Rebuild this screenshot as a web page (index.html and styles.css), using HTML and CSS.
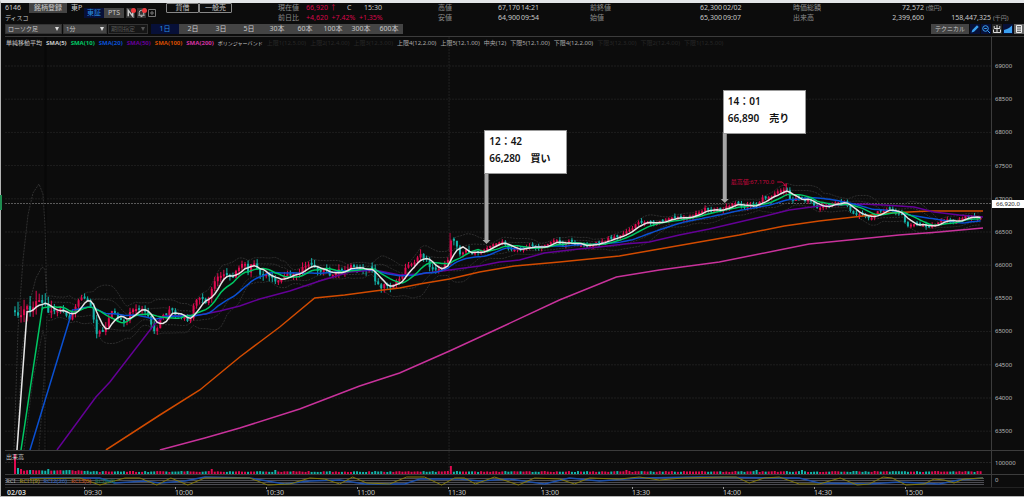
FILE: index.html
```
<!DOCTYPE html>
<html lang="ja">
<head>
  <meta charset="UTF-8" />
  <meta name="viewport" content="width=device-width, initial-scale=1.0"/>
  <title>6146 ディスコ - チャート</title>
  <link rel="stylesheet" href="styles.css">
</head>
<body>
  <div class="app">

    <!-- 銘柄情報 -->
    <header class="quote">
      <div class="symbol">
        <div class="symbol-name">
          <div class="symbol-code"><span>6146</span><button class="btn btn-register">銘柄登録</button></div>
          <h1>ディスコ</h1>
        </div>
        <span class="market">東P</span>
        <div class="market-tabs">
          <button class="btn active">東証</button>
          <button class="btn">PTS</button>
          <button class="icon-btn has-dot" aria-label="ニュース">
            <svg viewBox="0 0 10 10"><path d="M2.5 8.5V2l5 6.5V2" fill="none" stroke="#ccc" stroke-width="1.6"/></svg>
          </button>
          <button class="icon-btn has-dot" aria-label="アラート">
            <svg viewBox="0 0 10 10"><path d="M1.5 7.5h7M2.5 7V4.5a2.5 2.5 0 0 1 5 0V7M4 9h2" fill="none" stroke="#ccc"/></svg>
          </button>
          <button class="icon-btn icon-box" aria-label="設定">
            <svg viewBox="0 0 8 8"><path d="M.5.5h7v7h-7zM3 3h2v2H3z" fill="none" stroke="#777"/></svg>
          </button>
        </div>
        <div class="margin-tags"><button>貸借</button><button>一般売</button></div>
      </div>
      <div class="figures">
        <span class="key">現在値</span><span class="up">66,920 ↑</span><span class="close-mark">C</span><span>15:30</span>
        <span class="key">前日比</span><span class="up change">+4,620&nbsp; +7.42%&nbsp; +1.35%</span>
      </div>
      <div class="prices">
        <span class="key">高値</span><span class="num">67,170</span><span class="time">14:21</span>
        <span class="key">安値</span><span class="num">64,900</span><span class="time">09:54</span>
      </div>
      <div class="prices wide">
        <span class="key">前終値</span><span class="num">62,300</span><span class="time">02/02</span>
        <span class="key">始値</span><span class="num">65,300</span><span class="time">09:07</span>
      </div>
      <div class="totals">
        <span class="key">時価総額</span><span class="num">72,572</span><span class="unit">(億円)</span><span></span>
        <span class="key">出来高</span><span class="num">2,399,600</span><span class="num">158,447,325</span><span class="unit">(千円)</span>
      </div>
    </header>

    <!-- ツールバー -->
    <div class="toolbar">
      <span class="select"><select aria-label="チャート種類"><option>ローソク足</option><option>ライン</option></select></span>
      <span class="select"><select aria-label="足種"><option>1分</option><option>5分</option></select></span>
      <span class="select disabled"><select aria-label="期間" disabled><option>期間指定</option></select></span>
      <div class="periods">
        <button class="active">1日</button><button>2日</button><button>3日</button><button>5日</button><button>30本</button><button>60本</button><button>100本</button><button>300本</button><button>600本</button>
      </div>
      <div class="tools">
        <button class="technical">テクニカル</button>
        <button class="tool blue" aria-label="描画">
          <svg viewBox="0 0 10 10"><path d="M1.500 8.500l.8-2.500L7 1.300 8.700 3 4 7.700z" fill="#3aa0f0"/></svg>
        </button>
        <button class="tool blue" aria-label="拡大">
          <svg viewBox="0 0 10 10"><circle cx="4.500" cy="4.500" r="2.800" fill="none" stroke="#3aa0f0"/><path d="M3.200 4.500h2.600M6.600 6.600L9 9" stroke="#3aa0f0" fill="none"/></svg>
        </button>
        <button class="tool" aria-label="出力">
          <svg viewBox="0 0 10 10"><path d="M5 1v8M2.200 2v2.500h5.600V2M1.500 5.500V8.500h7v-3" fill="none" stroke="#ddd"/></svg>
        </button>
        <button class="tool blue" aria-label="出来高">
          <svg viewBox="0 0 10 10"><path d="M1 9V6l3-1 2-1 3-2.500V9z" fill="#3aa0f0"/></svg>
        </button>
        <button class="tool gray" aria-label="一覧">
          <svg viewBox="0 0 10 10"><path d="M2.500 1.500h5v7h-5zM2.500 4h5M2.500 6.200h5" fill="none" stroke="#eee"/></svg>
        </button>
      </div>
    </div>

    <!-- チャート -->
    <main class="pane price-pane">
      <div class="plot">
        <svg id="price" viewBox="5 37 987 413" preserveAspectRatio="none"></svg>
        <div class="legend">
          <span>単純移動平均</span><b>SMA(5)</b><b class="c-10">SMA(10)</b><b class="c-20">SMA(20)</b><b class="c-50">SMA(50)</b><b class="c-100">SMA(100)</b><b class="c-200">SMA(200)</b>
          <span class="bands-title">ボリンジャーバンド</span>
          <span class="off">上限1(12,5.00)</span><span class="off">上限2(12,4.00)</span><span class="off">上限3(12,3.00)</span>
          <span class="band">上限4(12,2.00)</span><span class="band">上限5(12,1.00)</span><span class="band">中央(12)</span><span class="band">下限5(12,1.00)</span><span class="band">下限4(12,2.00)</span>
          <span class="off">下限3(12,3.00)</span><span class="off">下限2(12,4.00)</span><span class="off">下限1(12,5.00)</span>
        </div>
        <span class="high-mark">最高値:67,170.0</span>
        <div class="note note-buy"><p>12：42</p><p>66,280　買い</p></div>
        <div class="note note-sell"><p>14：01</p><p>66,890　売り</p></div>
      </div>
      <div class="axis">
        <span>69000</span><span>68500</span><span>68000</span><span>67500</span><span>67000</span><span>66500</span><span>66000</span><span>65500</span><span>65000</span><span>64500</span><span>64000</span><span>63500</span>
        <strong class="last-price">66,920.0</strong>
      </div>
    </main>

    <section class="pane volume-pane">
      <div class="plot">
        <svg id="volume" viewBox="5 451 987 23" preserveAspectRatio="none"></svg>
        <span class="pane-title">出来高</span>
      </div>
      <div class="axis"><span>100000</span></div>
    </section>

    <section class="pane rci-pane">
      <div class="plot">
        <svg id="rci" viewBox="5 475 987 12" preserveAspectRatio="none"></svg>
        <div class="rci-legend">
          <span>RCI</span><span class="r1">RCI1(9)</span><span class="r2">RCI2(26)</span><span class="r3">RCI3(0)</span><span class="r4">RCI4(0)</span>
        </div>
      </div>
      <div class="axis"><span>0</span></div>
    </section>

    <footer class="time-axis">
      <b>02/03</b><span>09:30</span><span>10:00</span><span>10:30</span><span>11:00</span><span>11:30</span><span>13:00</span><span>13:30</span><span>14:00</span><span>14:30</span><span>15:00</span>
    </footer>
  </div>

  <script src="chart.js"></script>
</body>
</html>
```

FILE: styles.css
```
/* === BASE === */
* { margin: 0; padding: 0; box-sizing: border-box; }

:root {
  --bg: #0c0c0c;
  --text: #c8c8c8;
  --muted: #8c8c8c;
  --line: #3c3c3c;
  --button: #444;
  --navy: #071038;
  --blue: #2a8fe0;
  --up: #d8064a;
}

body {
  font-family: "Noto Sans", "Noto Sans CJK JP", sans-serif;
  font-size: 7px;
  line-height: 10px;
  color: var(--text);
  background: #e4e6e8;
}

button, select {
  font: inherit;
  color: inherit;
  border: none;
  background: var(--button);
  white-space: nowrap;
}

.app {
  position: relative;
  display: flex;
  flex-direction: column;
  height: 100vh;
  min-height: 300px;
  background: var(--bg);
  border: solid #b4b4b4;
  border-width: 3px 0 1px 1px;
  border-top-color: #e4e6e8;
  padding-left: 4px;
}

/* marker on the left frame */
.app::before {
  content: "";
  position: absolute;
  left: -1px;
  top: 39%;
  width: 2px;
  height: 15px;
  background: #1e8c50;
}

/* === QUOTE === */
.quote {
  display: grid;
  grid-template-columns: 273fr 160fr 152fr 203fr 231fr;
  height: 21px;
  white-space: nowrap;
}

.key { color: var(--muted); }

.symbol { display: flex; }
.symbol-name { width: 66px; }
.symbol-code { display: flex; justify-content: space-between; padding-right: 4px; }
.symbol-code .btn { width: 38px; }
.symbol h1 { font-size: 6px; font-weight: normal; line-height: 10px; }
.symbol .btn { height: 10px; line-height: 10px; }
.market { width: 13px; }
.market-tabs { display: flex; align-items: center; height: 20px; }
.market-tabs .btn { width: 20px; }
.market-tabs .active { background: var(--navy); color: var(--blue); }
.margin-tags { display: flex; margin-left: 10px; }
.margin-tags button {
  width: 33px;
  height: 10px;
  line-height: 8px;
  border: 1px solid #888;
  border-radius: 1px;
  background: none;
}

.icon-btn {
  position: relative;
  width: 9px;
  height: 10px;
  margin-left: 2px;
  background: #333;
}
.icon-btn svg { display: block; width: 100%; height: 100%; }
.icon-box { width: 8px; height: 8px; background: none; }
.has-dot::after {
  content: "";
  position: absolute;
  top: 0;
  right: -1px;
  width: 5px;
  height: 5px;
  border-radius: 50%;
  background: #f0393d;
}

.figures {
  display: grid;
  grid-template-columns: 28px 41px 17px auto;
  grid-auto-rows: 10px;
  justify-content: start;
}
.up { color: var(--up); }
.change { grid-column: 2 / 5; }

.prices, .totals {
  display: grid;
  grid-auto-rows: 10px;
  justify-content: start;
}
.prices { grid-template-columns: 60px 22px 20px; }
.prices.wide { grid-template-columns: 110px 22px 20px; }
.totals { grid-template-columns: 60px 71px 67px 20px; }
.num { text-align: right; }
.time { padding-left: 1px; }
.unit { padding-left: 2px; font-size: 6px; color: var(--muted); }

/* === TOOLBAR === */
.toolbar {
  display: flex;
  height: 10px;
  margin-bottom: 2px;
}

.select {
  position: relative;
  width: 57px;
  margin-right: 1px;
}
.select + .select { width: 44px; }
.select.disabled { width: 40px; margin-right: 3px; }
.select select {
  display: block;
  appearance: none;
  width: 100%;
  height: 10px;
  padding: 0 2px;
  border: 1px solid #333;
  font-size: 6px;
  line-height: 8px;
}
.select::after {
  content: "";
  position: absolute;
  top: 3px;
  right: 3px;
  border: 2px solid transparent;
  border-top: 4px solid #ddd;
  border-bottom: 0;
}
.select.disabled select { background: #161616; color: #555; opacity: 1; }
.select.disabled::after { border-top-color: #555; }

.periods { display: flex; background: var(--button); }
.periods button { width: 28px; line-height: 10px; }
.periods .active { background: var(--navy); color: var(--blue); }

.tools { display: flex; gap: 1px; margin-left: auto; }
.technical { width: 38px; font-size: 6px; line-height: 10px; }
.tool { width: 10px; height: 10px; background: #262626; }
.tool.blue { background: var(--navy); }
.tool.gray { background: #666; }
.tool svg { display: block; width: 100%; height: 100%; }

/* === PANES === */
.pane {
  display: flex;
  border-top: 1px solid var(--line);
}
.plot { position: relative; flex: 1; min-width: 0; }
.plot > svg { position: absolute; width: 100%; height: 100%; }
.axis {
  position: relative;
  width: 33px;
  padding-left: 3px;
  border-left: 1px solid var(--line);
  font-size: 6px;
  color: #bbb;
}

.price-pane { flex: 1; min-height: 0; }
.price-pane .axis {
  display: flex;
  flex-direction: column;
  justify-content: space-between;
  padding-top: 26px;
  padding-bottom: 16px;
  line-height: 6px;
}

.last-price {
  position: absolute;
  top: 39.5%;
  left: 0;
  width: 32px;
  padding-left: 4px;
  font-weight: normal;
  line-height: 8px;
  color: #222;
  background: #fff;
}

.legend {
  position: absolute;
  top: 1px;
  left: 1px;
  display: flex;
  gap: 4px;
  font-size: 6px;
  white-space: nowrap;
}
.c-10 { color: #00c864; }
.c-20 { color: #0a50d2; }
.c-50 { color: #640096; }
.c-100 { color: #d24b00; }
.c-200 { color: #d232a0; }
.bands-title { font-size: 5px; }
.band { color: #aaa; }
.off { color: #272727; }

.high-mark {
  position: absolute;
  top: 34%;
  right: 22%;
  font-size: 6px;
  color: #c8063f;
}

.note {
  position: absolute;
  width: 83px;
  height: 44px;
  padding: 2px 4px;
  border: 1px solid #999;
  background: #fff;
  color: #111;
  font-size: 10px;
  font-weight: 600;
  line-height: 17px;
  white-space: nowrap;
}
.note-buy { left: 48.6%; top: 22.5%; }
.note-sell { left: 72.8%; top: 12.8%; }

.volume-pane { height: 24px; }
.volume-pane .axis { padding-top: 7px; }
.pane-title { position: absolute; left: 1px; top: 1px; font-size: 6px; }

.rci-pane { height: 13px; }
.rci-legend {
  position: absolute;
  top: 1px;
  left: 1px;
  display: flex;
  gap: 4px;
  font-size: 6px;
  color: #aaa;
}
.r1 { color: #a8960a; }
.r2 { color: #2a64c8; }
.r3 { color: #c8460a; }
.r4 { color: #0a7850; }

/* === TIME AXIS === */
.time-axis {
  display: grid;
  grid-template-columns: 79fr 91fr 91fr 91fr 91fr 93fr 91fr 91fr 91fr 91fr 119fr;
  height: 9px;
  border-top: 1px solid #222;
  font-size: 7px;
  line-height: 9px;
}
.time-axis b { padding-left: 2px; }
.time-axis span { position: relative; }
.time-axis span::before {
  content: "";
  position: absolute;
  left: 0;
  top: -1px;
  width: 1px;
  height: 2px;
  background: #999;
}
```

FILE: chart.js
```
const NS = 'http://www.w3.org/2000/svg';
const STEP = 3.03;
const START = 15;
const BARS = 320;

function add(svg, name, attrs) {
  const el = document.createElementNS(NS, name);
  for (const key in attrs) el.setAttribute(key, attrs[key]);
  el.setAttribute('vector-effect', 'non-scaling-stroke');
  svg.appendChild(el);
}

function line(svg, points, color, width, dash) {
  const attrs = { points: points, fill: 'none', stroke: color, 'stroke-width': width || 1 };
  if (dash) attrs['stroke-dasharray'] = dash;
  add(svg, 'polyline', attrs);
}

// value at x on a list of x,y pairs
function valueAt(list, x) {
  for (let i = 2; i < list.length; i += 2) {
    if (x <= list[i]) {
      const t = (x - list[i - 2]) / (list[i] - list[i - 2]);
      return list[i - 1] + t * (list[i + 1] - list[i - 1]);
    }
  }
  return list[list.length - 1];
}

// fixed pseudo random, the chart is the same on every load
let seed = 6146;
function rand() {
  seed = (seed * 16807) % 2147483647;
  return seed / 2147483647;
}

const path = [
  14,314,18,316,21,313,25,306,28,307,31,312,34,308,37,300,40,297,43,304,46,308,49,315,52,312,56,311,60,308,64,310,67,318,
  70,320,73,310,77,302,80,295,82,296,85,299,88,301,91,308,94,322,97,332,100,330,103,332,106,325,110,316,113,312,116,313,
  119,318,122,322,125,324,128,316,130,310,134,310,138,310,141,307,144,312,148,317,151,322,154,334,157,330,160,320,164,316,
  167,313,170,311,174,311,178,320,181,318,186,319,190,318,193,310,196,298,199,295,202,300,206,302,210,294,213,283,216,279,
  218,276,221,274,226,276,230,275,234,276,238,268,241,264,245,264,248,272,252,264,256,262,259,274,263,276,267,275,270,278,
  275,280,279,281,283,278,288,275,293,275,298,273,302,268,306,265,310,262,313,268,318,272,322,270,327,272,332,276,336,273,
  340,270,345,270,350,267,355,267,359,270,364,271,368,268,373,268,375,280,378,285,382,288,385,284,388,287,391,289,394,284,
  398,281,402,276,405,268,409,265,413,263,417,258,421,255,425,257,428,262,431,268,434,268,438,268,443,266,448,263,450,242,
  453,240,457,245,460,253,464,252,467,250,472,252,477,252,483,252,486,248,492,245,496,243,500,243,505,242,508,250,512,250,
  517,248,522,250,528,246,533,247,538,248,543,246,548,245,552,242,557,240,561,246,566,243,570,242,575,244,580,245,585,246,
  590,245,595,244,600,243,606,240,612,238,618,237,622,235,627,230,632,228,638,224,643,222,647,221,653,224,658,223,663,222,
  667,220,672,218,676,218,682,218,687,217,692,216,697,214,702,211,706,208,712,211,717,211,722,210,727,206,732,205,735,203,
  740,205,745,208,750,203,755,207,760,202,765,197,770,198,775,194,780,192,787,188,789,196,792,202,796,198,800,198,805,202,
  810,200,814,204,817,208,820,209,824,206,830,205,835,202,840,204,845,202,848,205,852,212,857,215,862,215,867,217,872,217,
  877,213,882,211,887,208,892,211,897,214,902,213,906,222,909,226,915,223,918,224,923,225,928,227,933,226,937,223,942,221,
  947,220,952,221,958,222,963,218,967,216,972,218,977,217,984,216
];

const closes = [];
for (let i = 0; i < BARS; i++) {
  const x = START + i * STEP;
  const swing = x < 200 ? 5 : x < 480 ? 4 : 2.5;
  closes.push(valueAt(path, x) + (rand() - 0.5) * swing);
}

function average(i, n) {
  let sum = 0;
  for (let k = i - n + 1; k <= i; k++) sum += closes[k];
  return sum / n;
}

function sma(n, lead) {
  const out = lead.slice();
  for (let i = n - 1; i < BARS; i++) out.push(START + i * STEP, average(i, n));
  return out;
}

function band(k) {
  const out = [];
  for (let i = 11; i < BARS; i++) {
    const n = 12;
    const mean = average(i, n);
    let dev = 0;
    for (let j = i - n + 1; j <= i; j++) dev += (closes[j] - mean) ** 2;
    out.push(START + i * STEP, mean + k * (Math.sqrt(dev / n) + 1));
  }
  return out;
}

/* --- price --- */
const price = document.getElementById('price');
for (let i = 0; i < 12; i++) {
  const y = 66 + i * 33.2;
  line(price, [5, y, 992, y], '#1e1e1e', 1, '2 1');
}
line(price, [449.5, 37, 449.5, 450], '#222', 1, '2 1');
line(price, [45.5, 37, 45.5, 450], '#080808', 2);
line(price, [5, 203.5, 992, 203.5], '#5a5a5a', 1, '2 1');

// bollinger bands
[-2, -1, 1, 2].forEach(k => line(price, band(k), '#2e2e2e', 1, '2 1'));
line(price, [14,450, 18,330, 23,260, 28,215, 33,193, 39,184, 43,194, 45,225, 47,300], '#303030', 1, '2 1');
line(price, [17,450, 22,350, 29,305, 36,278, 42,267, 45,269, 47,300], '#303030', 1, '2 1');
line(price, [24,450, 33,380, 43,330, 45,340, 45,450], '#2a2a2a', 1, '2 1');
line(price, [39,450, 44,380, 47,316], '#2a2a2a', 1, '2 1');

// candles
for (let i = 0; i < BARS; i++) {
  const x = START + i * STEP;
  const close = closes[i];
  let open = i ? closes[i - 1] : 311;
  if (Math.abs(open - close) < 2) open = close + (open > close ? 2 : -2);
  const color = open > close ? '#e00a50' : '#14b4aa';
  const reach = x < 55 ? 12 : x < 470 ? 5 : 3;
  const top = Math.min(open, close);
  const bottom = Math.max(open, close);
  line(price, [x, top - rand() * reach, x, bottom + rand() * reach], color, 1);
  add(price, 'rect', { x: x - 1, y: top, width: 2, height: bottom - top, fill: color });
}
line(price, [450.5, 233, 450.5, 252], '#b4063f', 1);
line(price, [787, 184, 787, 196], '#e00a50', 1);

// moving averages
line(price, [160,450, 205,438, 240,428, 300,409, 360,386, 400,373, 450,351, 500,328, 560,300, 617,277, 660,270, 720,262, 780,250, 810,244, 850,240, 900,235, 940,232, 984,228], '#c8329b', 1.5);
line(price, [106,450, 160,415, 200,390, 240,357, 260,342, 280,327, 315,298, 345,295, 375,291, 400,288, 420,284, 450,279, 480,272, 515,266, 560,262, 620,256, 660,249, 700,242, 740,235, 785,226, 820,221, 855,217, 890,213, 930,211, 984,211], '#d24b00', 1.5);
line(price, [57,450, 96,397, 110,382, 154,325, 165,316, 200,315, 220,311, 240,306, 260,299, 290,291, 320,281, 350,272, 375,270, 400,275, 420,274, 450,270, 480,266, 500,262, 520,260, 545,253, 570,250, 600,247, 625,244, 650,242, 680,235, 710,229, 740,222, 770,215, 790,210, 820,206, 860,204, 885,205, 915,207, 935,212, 960,215, 984,217], '#640096', 1.5);
line(price, sma(20, [30, 450]), '#0a50d2', 1.5);
line(price, sma(10, [21, 450]), '#00c864', 1.5);
line(price, sma(5, [17, 450]), '#e6e6e6', 1.5);

// trade arrows
[[487, 173, 244], [725.5, 132, 203]].forEach(a => {
  const x = a[0], y = a[1], tip = a[2];
  add(price, 'polygon', {
    points: [x - 2, y, x + 2, y, x + 2, tip - 4, x + 4, tip - 4, x, tip, x - 4, tip - 4, x - 2, tip - 4],
    fill: '#a5a5a5'
  });
});
line(price, [778, 182, 783, 182, 786, 185], '#c8063f', 1);
line(price, [784, 185, 787, 186, 787, 183], '#c8063f', 1);

/* --- volume --- */
const volume = document.getElementById('volume');
const spikes = { 0: 20, 1: 6, 2: 5, 11: 5, 65: 5, 86: 4, 144: 8, 202: 4, 245: 4, 260: 4, 284: 3 };
line(volume, [5, 462.5, 992, 462.5], '#242424', 1, '2 1');
line(volume, [449.5, 451, 449.5, 474], '#242424', 1, '2 1');
for (let i = 0; i < BARS; i++) {
  const h = spikes[i] || (i < 25 ? 3 : 2) + rand();
  const up = i === 0 || i === 144 || (i && closes[i] < closes[i - 1]);
  add(volume, 'rect', { x: START - 1 + i * STEP, y: 474 - h, width: 2, height: h, fill: up ? '#e00a50' : '#14b4aa' });
}

/* --- RCI --- */
const rci = document.getElementById('rci');
[478.5, 480.5, 482.5, 484.5].forEach(y => line(rci, [5, y, 985, y], '#4c4c52', 1));
line(rci, [30,478, 100,478, 115,483, 145,481, 160,483, 185,481, 205,477, 250,478, 285,484, 310,481, 340,480, 365,484, 405,484, 420,479, 460,479, 480,481, 510,479, 545,484, 570,478, 600,481, 640,478, 700,477, 800,478, 820,483, 870,484, 900,482, 940,484, 960,480, 984,478], '#1e50aa', 1.5);
line(rci, [30,479, 80,478, 100,485, 125,478, 140,478, 157,485, 171,478, 188,485, 205,478, 250,478, 268,485, 290,484, 310,478, 325,479, 340,484, 353,477, 367,483, 390,484, 407,477, 425,477, 442,485, 455,478, 465,478, 476,484, 495,477, 519,485, 535,478, 560,479, 575,484, 590,478, 620,479, 640,477, 660,480, 684,478, 725,477, 737,477, 750,483, 765,478, 780,477, 800,484, 820,484, 841,478, 858,485, 870,484, 884,477, 893,478, 907,485, 925,484, 935,479, 945,480, 955,483, 965,479, 984,478], '#82780a', 1);
```
